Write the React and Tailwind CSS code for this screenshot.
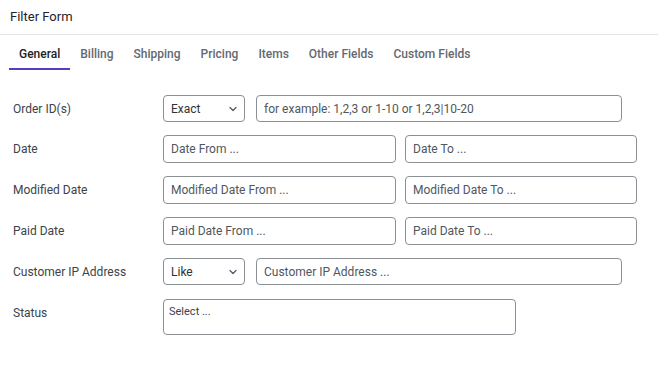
import React from "react"

const tabs = ["General", "Billing", "Shipping", "Pricing", "Items", "Other Fields", "Custom Fields"]

function Chevron() {
  return (
    <svg width="10" height="10" viewBox="0 0 10 10" fill="none" className="text-[#50575e]">
      <path d="M2 3.5 L5 6.5 L8 3.5" stroke="currentColor" strokeWidth="1.2" strokeLinecap="round" strokeLinejoin="round" />
    </svg>
  )
}

function Select({ value }) {
  return (
    <div className="flex h-[27px] w-[82px] shrink-0 items-center justify-between rounded-[4px] border border-[#8c8f94] pl-[7px] pr-[6px] text-[#2c3338]">
      <span>{value}</span>
      <Chevron />
    </div>
  )
}

function Field({ placeholder, className }) {
  return (
    <input
      readOnly
      placeholder={placeholder}
      className={
        "rounded-[4px] border border-[#8c8f94] px-[7px] text-[12px] text-[#2c3338] outline-none placeholder:text-[#50575e] " +
        className
      }
    />
  )
}

function Row({ label, children, top }) {
  return (
    <div className={top ? "flex items-start" : "flex items-center"}>
      <div className={top ? "w-[150px] shrink-0 pt-[6px] text-[#3c434a]" : "w-[150px] shrink-0 text-[#3c434a]"}>{label}</div>
      {children}
    </div>
  )
}

export default function App() {
  return (
    <div className="h-[371px] w-[658px] bg-white text-[12px] font-['Roboto',sans-serif]">
      <div className="flex h-[35px] items-center border-b border-[#e2e4e7] pl-[10px] text-[13px] text-[#1d2327]">
        Filter Form
      </div>
      <div className="flex pl-[9px]">
        {tabs.map((t, i) => (
          <div
            key={t}
            className={
              i === 0
                ? "border-b-2 border-[#5b3bc4] px-[10px] pt-[10px] pb-[5px] font-medium text-[#1d2327]"
                : "border-b-2 border-transparent px-[10px] pt-[10px] pb-[5px] font-medium text-[#646970]"
            }
          >
            {t}
          </div>
        ))}
      </div>
      <div className="flex flex-col gap-[13px] pt-[25px] pl-[13px]">
        <Row label="Order ID(s)">
          <Select value="Exact" />
          <Field placeholder="for example: 1,2,3 or 1-10 or 1,2,3|10-20" className="ml-[11px] h-[27px] w-[366px]" />
        </Row>
        <Row label="Date">
          <Field placeholder="Date From ..." className="h-[28px] w-[233px]" />
          <Field placeholder="Date To ..." className="ml-[9px] h-[28px] w-[232px]" />
        </Row>
        <Row label="Modified Date">
          <Field placeholder="Modified Date From ..." className="h-[28px] w-[233px]" />
          <Field placeholder="Modified Date To ..." className="ml-[9px] h-[28px] w-[232px]" />
        </Row>
        <Row label="Paid Date">
          <Field placeholder="Paid Date From ..." className="h-[28px] w-[233px]" />
          <Field placeholder="Paid Date To ..." className="ml-[9px] h-[28px] w-[232px]" />
        </Row>
        <Row label="Customer IP Address">
          <Select value="Like" />
          <Field placeholder="Customer IP Address ..." className="ml-[11px] h-[27px] w-[366px]" />
        </Row>
        <Row label="Status" top>
          <div className="mt-[1px] h-[36px] w-[353px] rounded-[4px] border border-[#8c8f94] px-[5px] pt-[4px] text-[11px] text-[#3c434a]">
            Select ...
          </div>
        </Row>
      </div>
    </div>
  )
}
